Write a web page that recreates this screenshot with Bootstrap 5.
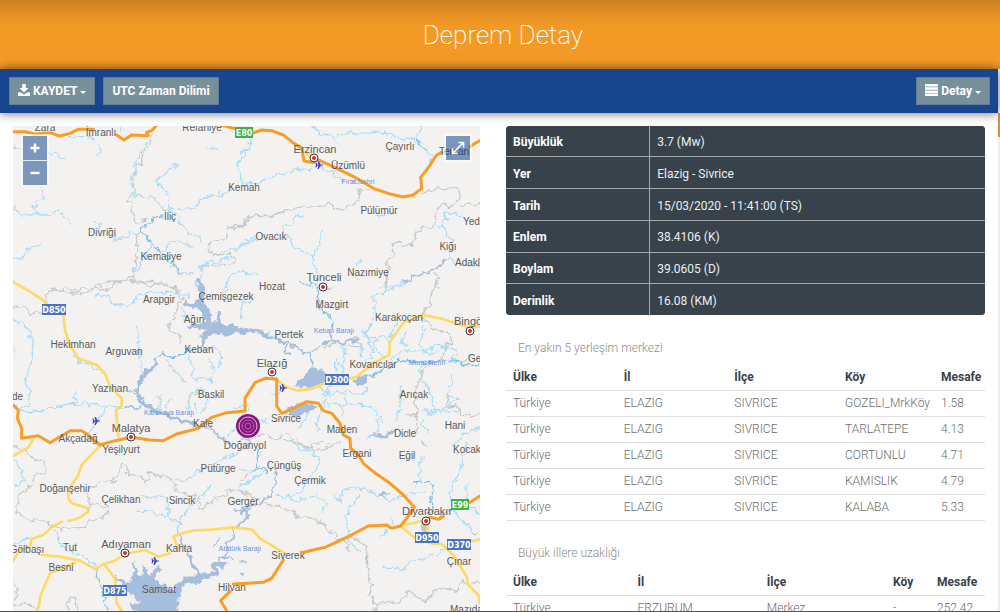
<!DOCTYPE html>
<html lang="tr">
<head>
<meta charset="utf-8">
<meta name="viewport" content="width=device-width, initial-scale=1">
<title>Deprem Detay</title>
<link href="https://cdn.jsdelivr.net/npm/bootstrap@5.3.0/dist/css/bootstrap.min.css" rel="stylesheet">
<style>
  body { font-family: Roboto, "Open Sans", sans-serif; font-size: 12px; color: #757575; background: #fff; }
  .page-top { height: 69px; background: linear-gradient(#c9811f, #e79325 16px, #f39a26 28px); }
  .page-top h1 { font-size: 26px; font-weight: 200; line-height: 71px; color: #fff; padding-left: 6px; }
  .toolbar { height: 44px; padding: 0 8px 0 9px; background: #17468e; box-shadow: 0 0 10px rgba(0,0,0,.6); z-index: 2; margin-right: 2px; }
  .tool-btn { --bs-btn-font-size: 12px; --bs-btn-font-weight: 700; --bs-btn-padding-x: 8px; --bs-btn-padding-y: 0; --bs-btn-line-height: 26px;
    --bs-btn-color: #fff; --bs-btn-bg: #78909c; --bs-btn-border-color: #607f94; --bs-btn-border-radius: 0;
    --bs-btn-hover-color: #fff; --bs-btn-hover-bg: #6b828e; --bs-btn-hover-border-color: #607f94; }
  .tool-btn svg { vertical-align: -1px; }
  .tool-btn.dropdown-toggle::after { margin-left: 3px; vertical-align: 1px; border-top-width: 3px; border-left-width: 3px; border-right-width: 3px; }
  .detail-area { padding: 13px 13px 0; gap: 26px; }
  .map-pane { flex: 467 1 0; min-width: 0; }
  .data-pane { flex: 479 1 0; min-width: 0; }
  .map-pane svg.map { width: 100%; height: auto; }
  .map-tools { top: 10px; left: 10px; gap: 1px; box-shadow: 0 0 0 2px rgba(255,255,255,.5); background: #e8edf3; }
  .map-full { top: 10px; right: 10px; box-shadow: 0 0 0 2px rgba(255,255,255,.5); }
  .map-btn { width: 24px; height: 24px; background: #7b98bc; color: #fff; border: 0; padding: 0; }
  .map-full { background: rgba(0,60,136,.5); }
  .map-btn svg { display: block; margin: auto; }
  .info-box { border-radius: 4px; background: #38424a; margin-bottom: 17px; }
  .info-table { --bs-table-bg: #38424a; --bs-table-color: #eceff1; height: 189px; font-size: 12px; }
  .info-table th, .info-table td { padding: 2px 7px 0; vertical-align: middle; border: 0 solid #a5a9ac; border-bottom-width: 1px; }
  .info-table th { width: 30%; color: #fff; border-right-width: 1px; }
  .info-table tr:last-child > * { border-bottom-width: 0; }
  .place-list { margin-bottom: 16px; border-radius: 4px; }
  .place-list h2 { font-size: 12px; font-weight: 300; line-height: 32px; padding-left: 12px; color: #8d8d8d; }
  .place-table { --bs-table-color: #6c6c6c; table-layout: fixed; border-color: #dedede; }
  .place-table th, .place-table td { padding: 0 0 0 7px; line-height: 25px; white-space: nowrap; }
  .place-table th { color: #37424a; font-weight: 700; line-height: 26px; }
  .place-table td { font-weight: 300; }
  .scroll-track { width: 2px; background: #eee; }
  .scroll-thumb { height: 24px; background: #d9912f; }
  .status-line { height: 1px; background: #555; }
  .w-country { width: 26%; } .w-city { width: 27%; }
  .w-village { width: 96px; } .w-near { width: 51px; } .w-dash { width: 44px; } .w-far { width: 55px; }

  .map text { font-family: "Liberation Sans", Arial, sans-serif; }
  .towns { font-size: 10px; fill: #5a5a5a; text-anchor: middle; }
  .towns .edge { text-anchor: start; }
  .cities { font-size: 11px; fill: #5a5a5a; text-anchor: middle; }
  .cities .edge { text-anchor: start; }
  .waters { font-size: 7px; fill: #6f8fdb; text-anchor: middle; }
  .map .shields text { font: bold 8px "DejaVu Sans", sans-serif; fill: #fff; text-anchor: middle; }
  .river, .stream, .limit, .lake, .reach, .arm { filter: url(#wander); }
  .river { fill: none; stroke: #a9dcf7; stroke-width: 4; stroke-linejoin: round; }
  .stream { fill: none; stroke: #79bde4; stroke-width: 4; stroke-linejoin: round; }
  .limit { fill: none; stroke: #c8c8c8; stroke-width: 4; stroke-linejoin: round; }
  .lake { fill: #a5bedd; stroke: #a5bedd; stroke-width: 3; stroke-linejoin: round; }
  .reach { fill: none; stroke: #a5bedd; stroke-width: 11; stroke-linejoin: round; stroke-linecap: round; }
  .arm { fill: none; stroke: #a5bedd; stroke-width: 6; stroke-linejoin: round; }
  .minor { fill: none; stroke: #fdda67; stroke-width: 8; stroke-linejoin: round; stroke-linecap: round; }
  .major { fill: none; stroke: #f99d27; stroke-width: 9; stroke-linejoin: round; stroke-linecap: round; }
</style>
</head>
<body>
<div class="vh-100 d-flex flex-column overflow-hidden">
  <header class="page-top flex-shrink-0 text-center"><h1 class="m-0">Deprem Detay</h1></header>
  <nav class="toolbar position-relative flex-shrink-0 d-flex align-items-center">
    <button type="button" class="btn tool-btn dropdown-toggle me-2" data-bs-toggle="dropdown"><svg width="12" height="12" viewBox="0 0 12 12" fill="#fff" aria-hidden="true"><path d="M4.200 0h3.600v4h2.700L6 8.600 1.500 4h2.700zM0 8.600h3.200L6 10.800l2.800-2.200H12V12H0z"/></svg> KAYDET</button>
    <button type="button" class="btn tool-btn">UTC Zaman Dilimi</button>
    <button type="button" class="btn tool-btn dropdown-toggle ms-auto" data-bs-toggle="dropdown"><svg width="13" height="12" viewBox="0 0 13 12" fill="#fff" aria-hidden="true"><path d="M0 0h13v2.500H0zM0 3.200h13v2.500H0zM0 6.400h13v2.500H0zM0 9.600h13V12H0z"/></svg> Detay</button>
  </nav>
  <div class="d-flex flex-fill overflow-hidden">
    <main class="detail-area d-flex align-items-start flex-fill overflow-hidden">
      <section class="map-pane position-relative">
        <svg class="map d-block" viewBox="13 126 467 500" role="img" aria-label="Harita">
          <defs>
            <filter id="wander" x="-5%" y="-5%" width="110%" height="110%" color-interpolation-filters="sRGB">
              <feTurbulence type="fractalNoise" baseFrequency=".05" numOctaves="2" seed="7"/>
              <feDisplacementMap in="SourceGraphic" scale="28" xChannelSelector="R" yChannelSelector="G"/>
            </filter>
            <g id="town-dot"><circle r="4" fill="#fff" stroke="#333"/><circle r="2" fill="#ee2020"/></g>
            <path id="plane" d="M-3.500-2.500h1l1 2h1L-1.500-4h1.200L1.800-.6H4v1.200H1.800L-.3 4h-1.200L-.5.5h-1l-1 2h-1L-3 0z" fill="#4040c8"/>
          </defs>
          <rect x="13" y="126" width="467" height="500" fill="#f3f2f0"/>
          <g transform="translate(0 120) scale(.33333)">
            <path class="limit" d="M460 45L447 80 425 100 425 130 402 135 400 220 380 245 395 265 405 308 440 300 440 320 405 345 412 375 405 440 398 475 350 485 325 510 200 508 145 508M398 475L430 490 460 483 500 495 540 510M750 290L738 292 740 312 710 323 685 318 680 355 630 370 622 390 640 402 705 405 705 428 600 440"/>
            <path class="river" d="M205 50L270 50 295 70 300 98 285 102M39 80L60 92 75 90M142 100L170 103 203 117M120 195L130 232 98 262 105 280 70 288 39 260M105 280L130 285 180 278 205 292 212 315M285 298L300 320 295 332M39 413L62 418 85 385 120 373M460 50L418 98 410 145 392 180 405 223 465 235 485 258 492 280M540 137L520 133 500 158 468 180 480 195 505 225 510 262 540 310 575 345 610 362M520 265L585 268 600 237 650 225 690 212M620 85L640 82 657 85M360 20L365 35M750 88L735 92 720 125 707 132 725 160 725 192M340 357L365 357 390 340 425 340M480 395L510 370 545 365 578 380M450 378L432 412 418 442 400 453M750 365L700 390 660 390M700 412L640 425 598 440 608 460 600 478M668 510L690 470 715 450 750 465"/>
            <path class="stream" d="M492 290L465 295 425 325 425 343 465 380 482 398 518 430 532 460"/>
            <path class="arm" stroke-opacity=".6" d="M535 462L580 460M590 475L595 510"/>
          </g>
          <g transform="translate(240 120) scale(.33333)">
            <path class="limit" d="M0 318L20 305 20 288 90 290 145 270 205 262 265 255 305 272 325 255 355 248 360 210 400 205M545 218L600 203 655 203 660 240 640 255 597 260 590 290 588 315 528 333 522 378 500 375 470 365 455 380 465 400 445 420 440 460 440 500M660 255L720 248M575 445L595 475 590 505"/>
            <path class="river" d="M30 55L28 80 0 100M0 175L10 195 60 185 100 165 145 155 165 150 250 140 295 170 360 190M215 15L240 42 270 45 300 70 M290 50L310 42 370 40 430 35 470 55 520 55 530 75M545 15L530 50 545 80 560 90 575 115 565 140M10 362L50 350M0 380L50 358M140 345L155 355 155 380 190 390 220 415 225 450 235 480M250 330L235 375 220 415M125 340L130 318 190 282M0 455L55 465M345 430L360 430 362 415M405 280L420 288 430 285M720 440L660 430 625 415 610 425 M670 290L640 280 610 275 620 300 600 320 640 360 635 390 610 425M415 505L455 500 490 485"/>
            <path class="stream" d="M530 60L545 82 560 90M180 485L235 498"/>
            <path class="arm" d="M490 488L520 470 555 462 590 445 620 420"/>
          </g>
          <g transform="translate(0 280) scale(.33333)">
            <path class="limit" d="M145 30L135 70 125 100 90 100 75 85 39 80M145 30L180 28 210 40 270 35 310 10 350 5 400 2 450 15 500 12 530 28 545 60 525 90 525 115 500 130 510 150 535 165 545 190M39 200L45 215"/>
            <path class="river" d="M280 43L310 47 345 75 380 80 420 45 450 35 530 40 570 50M39 118L75 140 100 180 95 245 75 310 90 335 85 375 65 385M39 375L75 395 150 390 205 370 300 375 380 385 410 380M228 332L225 368M325 380L265 460 258 480M413 137L415 190 425 275M222 218L240 245 310 278M500 240L520 270 560 310M565 220L580 260 575 290 630 300 645 270 625 235M600 210L640 200 665 225 655 270M595 325L570 350 560 390M595 325L625 345 615 390 600 400M470 345L485 345 480 380 460 395M520 350L490 385M590 370L585 400M683 0L670 50M540 80L560 115M680 470L720 430M700 385L740 375"/>
            <path class="stream" d="M470 240L490 225 520 235 550 220 575 205"/>
            <path class="lake" d="M595 0L600 60 580 72 555 60 562 78 600 90 622 110 618 132 575 130 560 143 605 145 625 138 608 158 602 195 612 192 618 165 650 160 668 168 700 160 750 158 750 146 715 145 700 130 675 138 660 120 662 95 652 95 648 130 632 125 630 90 612 70 605 0z"/>
            <path class="reach" d="M470 255L430 285 412 320 410 350 435 375 470 395 520 412 590 435"/>
            <path class="arm" d="M370 380L410 385 440 375M390 338L412 335M590 440L640 450 665 475 690 490M465 235L475 255"/>
          </g>
          <g transform="translate(240 280) scale(.33333)">
            <path class="limit" d="M595 0L575 40 570 75 545 100 575 150 630 155 635 190 600 200M440 0L430 40M0 480L30 478 70 460 110 480 140 460 190 500 250 490M490 405L530 400 530 450 500 460M530 400L525 330 545 280 570 240M630 340L620 380 650 380 670 410 720 400M250 210L260 195 350 175 365 200 320 200M620 200L600 240"/>
            <path class="river" d="M0 115L10 70 40 60M490 15L440 30 400 50 405 90 395 135 370 170M300 190L320 220 300 250 310 280M350 180L365 200 360 230M365 150L385 170 400 235 370 240M385 170L440 170 450 200M410 175L400 200 430 230M470 130L450 170M500 150L480 190 500 200M540 200L545 160 555 140M450 240L485 215 560 210 600 190 650 215 630 245 660 250 700 225M600 215L570 225 540 200M545 240L540 290 570 330 585 400M585 400L545 395M635 280L625 340 660 355M655 350L600 400M480 310L485 350 470 420M240 320L270 345 320 330 350 350 390 330 370 320M320 340L310 380M260 350L235 420 230 455M220 375L175 450M300 370L360 370 400 390 435 425M410 420L415 450 385 480M25 380L0 420M60 440L30 460 0 490M55 420L90 425M90 350L130 330M290 235L290 280M280 305L250 350M550 390L650 395M720 440L680 460 640 500M555 410L545 430 565 455M240 370L300 375 310 400"/>
            <path class="stream" d="M235 20L235 80 270 110 278 150M250 20L275 22M385 290L440 265 485 240 560 248 640 240 680 255 720 250"/>
            <path class="reach" d="M0 150L60 155 90 175"/>
            <path class="arm" d="M60 155L120 180 160 200 210 222 218 260M215 215L270 180 310 188 360 180M110 165L120 190M270 180L275 160M140 195L130 215 150 225M395 470L435 468 470 450M400 455L435 470 455 455M545 480L560 500"/>
            <path class="lake" d="M165 322L180 300 215 266 245 270 270 300 220 318zM340 300L360 288 388 287 380 308 350 315zM125 398L180 372 230 375 222 388 165 407z"/>
          </g>
          <g transform="translate(0 440) scale(.33333)">
            <path class="limit" d="M39 20L75 30 95 50 135 70 135 95 105 110 90 140 55 165 50 215 90 240 140 245 180 270 250 262 285 240 320 225 325 200 265 190 260 150 300 130 335 125 350 100 370 75 382 80 380 105 410 105 440 130 445 95 500 115 525 135 535 155 590 170 600 210 640 180 680 165 690 150 745 155M45 430L50 470 39 480M39 495L80 490 120 512M200 512L205 480 230 470 235 512"/>
            <path class="river" d="M39 50L60 90 75 125 50 140M39 315L70 300 100 292M160 272L172 285 180 315 220 340 260 355 290 385M425 170L500 172 505 230M410 213L430 207 470 220 500 232 535 245 535 275M630 130L605 170 570 200 540 240M750 10L690 50 640 75 600 95 570 118 520 122 490 108M715 140L750 125"/>
            <path class="stream" d="M290 390L300 430 310 470 325 512M500 170L510 190"/>
            <path class="arm" d="M535 275L550 320 570 345 575 380 600 410M740 205L740 235 700 265 705 290 680 310 685 340 660 350 650 380M700 210L740 208M660 290L640 320M670 350L700 360"/>
            <path class="reach" d="M600 408L650 400 640 380 675 370M575 370L600 410M450 430L430 400M435 430L400 415M460 410L475 385"/>
            <path class="lake" d="M345 408L380 430 400 420 400 365 412 400 425 410 435 380 445 410 470 390 460 415 485 430 520 450 545 425 560 405 600 410 630 402 600 425 560 430 545 450 525 525 410 525 390 490 430 488 400 470 370 445z"/>
          </g>
          <g transform="translate(240 440) scale(.33333)">
            <path class="limit" d="M130 0L170 10 230 35 270 15 300 10M65 195L130 200 180 230 230 235 250 255 290 290 320 310 325 335M325 285L380 320 380 380 395 430 390 470 410 490 480 485 510 450 525 470 560 480 590 450 650 450 660 425 720 430M410 490L400 512M0 150L60 180M0 120L60 80"/>
            <path class="river" d="M140 5L160 5 180 25 210 30 240 55 220 95 190 130 190 155 150 170 110 165M145 172L165 185 190 180 210 165 240 170 255 190 248 215M285 160L300 185 310 150 345 140 380 155 430 165 450 180 520 160 555 155M360 165L325 210 320 240 325 300 360 335M455 235L445 260 460 255M420 292L450 270M430 385L480 385 530 360 600 340 615 320M680 10L660 90 630 150 635 210 680 255 700 285M680 130L685 190 720 225M545 50L535 90 545 120M600 225L635 205M0 140L50 110 80 90M0 85L40 90"/>
            <path class="stream" d="M60 20L45 90 75 90 80 100M520 130L545 125 580 135 575 180 580 210 560 220M700 290L720 285"/>
            <path class="arm" d="M105 90L110 130 90 165 60 190 20 200 0 220M415 165L450 162M430 165L440 180M20 200L20 230M0 370L15 370M0 400L15 405"/>
            <path d="M543 245l20 0 5 20-12 14-12-8z" fill="#c4c4c4"/>
          </g>
          <g transform="translate(0 120) scale(.33333)">
            <path class="minor" d="M39 485L90 515 140 548M190 580L195 630 210 675 235 715 290 735 315 760 330 800 365 835 365 858 348 870 355 950M100 958L85 982 39 1008M300 977L245 1035 235 1065 205 1110 205 1135 215 1150 265 1165 265 1175 235 1195 205 1203M185 1205L155 1222 130 1245 95 1257 90 1280 60 1290 39 1322M125 1305L180 1310 240 1322 287 1348 310 1332 345 1322 375 1302 435 1290 475 1310 510 1300M535 1285L520 1250 545 1240 580 1232 640 1228 700 1222 755 1228 780 1255 855 1300M312 1332L345 1375 350 1450 370 1480M225 1328L150 1360 122 1425 112 1480M830 777L860 802 895 812 940 805 980 787M1045 777L1070 770 1120 730 1167 705 1170 665 1210 608 1270 585 1320 595 1400 620 1440 620M1202 1218L1265 1203M1202 1218L1240 1250 1300 1272 1325 1272 1360 1305 1400 1370 1405 1395 1435 1425 1440 1450M1280 1200L1282 1240M1410 1265L1440 1258M910 92L930 110"/>
            <path class="major" d="M39 35L75 35 105 42 150 38 178 48 210 40 235 28 280 28M350 45L372 60 395 45 445 47 440 37 455 32 470 16M665 16L710 27M755 40L785 30 815 32 850 45 875 65 905 85 912 123 942 128M952 118L1010 145 1065 172 1120 205 1170 222 1210 231 1240 225 1265 205 1262 172 1280 150 1310 105 1325 97M1410 80L1425 70 1440 62M39 855L55 870 52 895 65 925 65 955 115 947 150 968 180 950 210 932 245 932 265 945 300 975 345 962 395 952 450 960 490 962 530 942 595 925 635 892 680 878 735 873 735 835 765 788 795 775 830 777 830 858 845 880 880 865 920 845 955 850 970 872 995 880 1020 910 1030 945 1050 955 1052 985 1075 1005 1090 1030 1120 1055 1170 1090 1210 1125 1243 1162 1235 1175 1202 1218 1175 1225 1160 1215 1105 1218 1045 1250 975 1282 910 1297M850 1320L815 1375 790 1387 700 1392M690 1415L662 1442 680 1472M1290 1192L1315 1198 1330 1190M1410 1147L1440 1128"/>
          </g>
          <g class="shields">
            <g fill="#4a74bb"><path d="M42 304h24v11H42zM325 374h24v11h-24zM103 585h24v11h-24zM415 532h24v11h-24zM447 539h24v11h-24z"/></g>
            <g fill="#3fb24a"><path d="M235 127h18v11h-18zM451 499h18v11h-18z"/></g>
            <text x="54" y="313">D850</text><text x="337" y="383">D300</text><text x="115" y="594">D875</text><text x="427" y="541">D950</text><text x="459" y="548">D370</text><text x="244" y="136">E80</text><text x="460" y="508">E99</text>
          </g>
          <g class="waters">
            <text x="358" y="184">Fırat Nehri</text><text x="169" y="415">Karakaya Barajı</text><text x="334" y="333">Keban Barajı</text><text x="427" y="365">Murat Nehri</text><text x="240" y="551">Atatürk Barajı</text>
          </g>
          <g class="towns">
            <text x="45" y="131">Zara</text><text x="101" y="136">İmranlı</text><text x="202" y="131">Refahiye</text><text x="244" y="191">Kemah</text><text x="170" y="220">İliç</text><text x="102" y="236">Divriği</text><text x="161" y="260">Kemaliye</text>
            <text x="348" y="169">Üzümlü</text><text x="400" y="150">Çayırlı</text><text x="454" y="155">Tercan</text><text x="379" y="214">Pülümür</text><text class="edge" x="463" y="225">Yedisu</text><text x="448" y="250">Kiğı</text><text class="edge" x="455" y="266">Adaklı</text><text x="271" y="240">Ovacık</text><text x="368" y="276">Nazımiye</text><text x="272" y="290">Hozat</text>
            <text x="159" y="303">Arapgir</text><text x="226" y="300">Çemişgezek</text><text x="194" y="323">Ağın</text><text x="73" y="348">Hekimhan</text><text x="124" y="355">Arguvan</text><text x="199" y="353">Keban</text><text x="110" y="392">Yazıhan</text><text x="211" y="398">Baskil</text><text class="edge" x="12" y="400">de</text><text x="78" y="442">Akçadağ</text><text x="203" y="427">Kale</text><text x="121" y="453">Yeşilyurt</text><text x="245" y="449">Doğanyol</text>
            <text x="332" y="308">Mazgirt</text><text x="399" y="321">Karakoçan</text><text x="289" y="338">Pertek</text><text x="373" y="368">Kovancılar</text><text class="edge" x="468" y="362">Genç</text><text x="414" y="398">Arıcak</text><text x="286" y="422">Sivrice</text><text x="342" y="433">Maden</text><text x="455" y="429">Hani</text><text x="405" y="437">Dicle</text><text class="edge" x="453" y="453">Kocaköy</text>
            <text x="218" y="472">Pütürge</text><text x="65" y="492">Doğanşehir</text><text x="121" y="503">Çelikhan</text><text x="182" y="504">Sincik</text><text x="243" y="505">Gerger</text><text x="27" y="553">Gölbaşı</text><text x="70" y="551">Tut</text><text x="179" y="552">Kahta</text><text x="61" y="571">Besni</text><text x="159" y="593">Samsat</text><text x="232" y="591">Hilvan</text>
            <text x="357" y="457">Ergani</text><text x="407" y="459">Eğil</text><text x="284" y="469">Çüngüş</text><text x="310" y="484">Çermik</text><text x="288" y="559">Siverek</text><text x="459" y="565">Çınar</text><text class="edge" x="450" y="613">Mazıdağı</text>
          </g>
          <g class="cities">
            <text x="315" y="153">Erzincan</text><text x="324" y="281">Tunceli</text><text x="131" y="432">Malatya</text><text class="edge" x="454" y="325">Bingöl</text><text x="272" y="367">Elazığ</text><text x="126" y="548">Adıyaman</text><text x="427" y="515">Diyarbakır</text>
          </g>
          <use href="#town-dot" x="314" y="158"/><use href="#town-dot" x="323" y="287"/><use href="#town-dot" x="131" y="437"/><use href="#town-dot" x="470" y="331"/><use href="#town-dot" x="272" y="372"/><use href="#town-dot" x="125" y="553"/><use href="#town-dot" x="426" y="521"/>
          <use href="#plane" x="319" y="165"/><use href="#plane" x="96" y="421"/><use href="#plane" x="283" y="388"/><use href="#plane" x="155" y="561"/>
          <circle cx="248" cy="426" r="12" fill="#85157f"/>
          <g fill="none" stroke="#e3bfe0" stroke-width="1"><circle cx="248" cy="426" r="9"/><circle cx="248" cy="426" r="6" stroke="#b562b0"/><circle cx="248" cy="426" r="3" stroke="#b562b0"/></g>
        </svg>
        <div class="map-tools position-absolute d-flex flex-column">
          <button type="button" class="map-btn" aria-label="Yakınlaştır"><svg width="12" height="12" viewBox="0 0 12 12"><path d="M6 1.500v9M1.500 6h9" stroke="#fff" stroke-width="2.400"/></svg></button>
          <button type="button" class="map-btn" aria-label="Uzaklaştır"><svg width="12" height="12" viewBox="0 0 12 12"><path d="M1.500 6h9" stroke="#fff" stroke-width="2.400"/></svg></button>
        </div>
        <button type="button" class="map-btn map-full position-absolute" aria-label="Tam ekran"><svg width="14" height="14" viewBox="0 0 14 14" fill="none" stroke="#fff" stroke-width="1.600"><path d="M2 12L12 2M7.500 1.500h5v5M1.500 7.500v5h5"/></svg></button>
      </section>
      <section class="data-pane">
        <div class="info-box overflow-hidden">
          <table class="table info-table m-0">
            <tbody>
              <tr><th scope="row">Büyüklük</th><td>3.7 (Mw)</td></tr>
              <tr><th scope="row">Yer</th><td>Elazig - Sivrice</td></tr>
              <tr><th scope="row">Tarih</th><td>15/03/2020 - 11:41:00 (TS)</td></tr>
              <tr><th scope="row">Enlem</th><td>38.4106 (K)</td></tr>
              <tr><th scope="row">Boylam</th><td>39.0605 (D)</td></tr>
              <tr><th scope="row">Derinlik</th><td>16.08 (KM)</td></tr>
            </tbody>
          </table>
        </div>
        <div class="place-list">
          <h2 class="mt-0 mb-0">En yakın 5 yerleşim merkezi</h2>
          <table class="table place-table m-0">
            <thead><tr><th>Ülke</th><th>İl</th><th>İlçe</th><th class="w-village">Köy</th><th class="w-near">Mesafe</th></tr></thead>
            <tbody>
              <tr><td>Türkiye</td><td>ELAZIG</td><td>SIVRICE</td><td>GOZELI_MrkKöy</td><td>1.58</td></tr>
              <tr><td>Türkiye</td><td>ELAZIG</td><td>SIVRICE</td><td>TARLATEPE</td><td>4.13</td></tr>
              <tr><td>Türkiye</td><td>ELAZIG</td><td>SIVRICE</td><td>CORTUNLU</td><td>4.71</td></tr>
              <tr><td>Türkiye</td><td>ELAZIG</td><td>SIVRICE</td><td>KAMISLIK</td><td>4.79</td></tr>
              <tr><td>Türkiye</td><td>ELAZIG</td><td>SIVRICE</td><td>KALABA</td><td>5.33</td></tr>
            </tbody>
          </table>
        </div>
        <div class="place-list">
          <h2 class="mt-0 mb-0">Büyük illere uzaklığı</h2>
          <table class="table place-table m-0">
            <thead><tr><th class="w-country">Ülke</th><th class="w-city">İl</th><th>İlçe</th><th class="w-dash">Köy</th><th class="w-far">Mesafe</th></tr></thead>
            <tbody>
              <tr><td>Türkiye</td><td>ERZURUM</td><td>Merkez</td><td>-</td><td>252.42</td></tr>
            </tbody>
          </table>
        </div>
      </section>
    </main>
    <div class="scroll-track flex-shrink-0"><div class="scroll-thumb"></div></div>
  </div>
  <div class="status-line flex-shrink-0"></div>
</div>
<script src="https://cdn.jsdelivr.net/npm/bootstrap@5.3.0/dist/js/bootstrap.bundle.min.js"></script>
</body>
</html>
